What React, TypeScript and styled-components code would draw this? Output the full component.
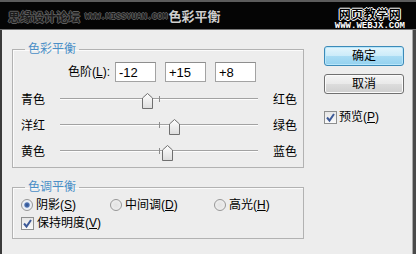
import React from 'react';
import styled, { createGlobalStyle } from 'styled-components';

const GlobalStyle = createGlobalStyle`
  html, body {
    margin: 0;
    padding: 0;
    background: #ededed;
  }
  body {
    font-family: "Liberation Sans", "Noto Sans CJK SC", sans-serif;
    font-size: 12px;
    color: #000;
  }
`;

const sliders = [
  { left: '青色', right: '红色', value: -12 },
  { left: '洋红', right: '绿色', value: 15 },
  { left: '黄色', right: '蓝色', value: 8 },
];

const levels = ['-12', '+15', '+8'];

const Check = () => (
  <svg width="11" height="11" viewBox="0 0 11 11">
    <path d="M2 5.5 L4.5 8.5 L9 2" fill="none" stroke="#3d5a98" strokeWidth="2" />
  </svg>
);

const ThumbShape = () => (
  <svg width="11" height="16" viewBox="0 0 11 16">
    <defs>
      <linearGradient id="tg" x1="0" y1="0" x2="0" y2="1">
        <stop offset="0" stopColor="#ffffff" />
        <stop offset="1" stopColor="#dcdcdc" />
      </linearGradient>
    </defs>
    <path d="M0.5 15.5 V5 L5.5 0.5 L10.5 5 V15.5 Z" fill="url(#tg)" stroke="#6f6f6f" />
  </svg>
);

const App = () => {
  return (
    <>
      <GlobalStyle />
      <Window>
        <TitleBar>
          <SiteMark>思缘设计论坛</SiteMark>
          <SiteUrl>WWW.MISSYUAN.COM</SiteUrl>
          <Title>色彩平衡</Title>
          <RightMark>
            <RightName>网页教学网</RightName>
            <RightUrl>WWW.WEBJX.COM</RightUrl>
          </RightMark>
        </TitleBar>
        <Body>
          <LeftColumn>
            <Group>
              <Legend>色彩平衡</Legend>
              <LevelRow>
                <LevelLabel>
                  色阶(<u>L</u>):
                </LevelLabel>
                {levels.map((v) => (
                  <LevelInput key={v} defaultValue={v} />
                ))}
              </LevelRow>
              <SliderList>
                {sliders.map((s) => (
                  <SliderRow key={s.left}>
                    <SideLabel>{s.left}</SideLabel>
                    <Track>
                      <Thumb style={{ left: 99 + s.value - 5 }}>
                        <ThumbShape />
                      </Thumb>
                    </Track>
                    <SideLabel $right>{s.right}</SideLabel>
                  </SliderRow>
                ))}
              </SliderList>
            </Group>
            <Group $second>
              <Legend>色调平衡</Legend>
              <RadioRow>
                <Option>
                  <Radio $checked />
                  <span>
                    阴影(<u>S</u>)
                  </span>
                </Option>
                <Option>
                  <Radio />
                  <span>
                    中间调(<u>D</u>)
                  </span>
                </Option>
                <Option>
                  <Radio />
                  <span>
                    高光(<u>H</u>)
                  </span>
                </Option>
              </RadioRow>
              <CheckRow>
                <Option>
                  <Box>
                    <Check />
                  </Box>
                  <span>
                    保持明度(<u>V</u>)
                  </span>
                </Option>
              </CheckRow>
            </Group>
          </LeftColumn>
          <RightColumn>
            <Button $primary>确定</Button>
            <Button>取消</Button>
            <Preview>
              <Box>
                <Check />
              </Box>
              <span>
                预览(<u>P</u>)
              </span>
            </Preview>
          </RightColumn>
        </Body>
      </Window>
    </>
  );
};

export default App;

const Window = styled.div`
  width: 416px;
  height: 254px;
  display: flex;
  flex-direction: column;
  background: #4a4a4a;
  overflow: hidden;
`;

const TitleBar = styled.div`
  height: 27px;
  flex: none;
  background: #050505;
  border-top: 2px solid #5c5c5c;
  border-bottom: 1px solid #767676;
  display: flex;
  align-items: center;
  padding: 0 11px 0 8px;
`;

const SiteMark = styled.span`
  font-family: "Noto Sans CJK SC", sans-serif;
  font-size: 12px;
  font-weight: bold;
  line-height: 14px;
  color: #1c1c1c;
  text-shadow: 1px 0 0 #5e5e5e, -1px 0 0 #5e5e5e, 0 1px 0 #5e5e5e, 0 -1px 0 #5e5e5e;
  margin-top: 2px;
`;

const SiteUrl = styled.span`
  font-family: "Liberation Mono", monospace;
  font-size: 8.6px;
  font-weight: bold;
  color: #1c1c1c;
  text-shadow: 1px 0 0 #5a5a5a, -1px 0 0 #5a5a5a, 0 1px 0 #5a5a5a, 0 -1px 0 #5a5a5a;
  margin: 3px 0 0 5px;
`;

const Title = styled.span`
  font-family: "Noto Sans CJK SC", sans-serif;
  font-size: 13px;
  font-weight: bold;
  line-height: 16px;
  color: #cfcfcf;
  margin-left: 1px;
`;

const RightMark = styled.div`
  margin-left: auto;
  display: flex;
  flex-direction: column;
  align-items: center;
  margin-top: 6px;
`;

const RightName = styled.span`
  font-family: "Noto Sans CJK SC", sans-serif;
  font-size: 12px;
  font-weight: bold;
  line-height: 14px;
  color: #000;
  letter-spacing: 0.5px;
  text-shadow: 1px 0 0 #fff, -1px 0 0 #fff, 0 1px 0 #fff, 0 -1px 0 #fff;
`;

const RightUrl = styled.span`
  font-family: "Liberation Mono", monospace;
  font-size: 9px;
  font-weight: bold;
  line-height: 9px;
  color: #fff;
  margin-top: 1px;
`;

const Body = styled.div`
  flex: 1;
  margin-right: 3px;
  background: #ededed;
  border-left: 2px solid #3a3a3a;
  border-right: 1px solid #a8a8a8;
  display: flex;
  padding: 12px 0 0 10px;
`;

const LeftColumn = styled.div`
  width: 292px;
  display: flex;
  flex-direction: column;
`;

const RightColumn = styled.div`
  width: 80px;
  margin-left: 20px;
  padding-top: 4px;
  display: flex;
  flex-direction: column;
  gap: 8px;
`;

const Group = styled.fieldset<{ $second?: boolean }>`
  margin: ${(p) => (p.$second ? '12px 0 0' : '0')};
  padding: 0 0 ${(p) => (p.$second ? '6px' : '2px')};
  border: 1px solid #b2b2b2;
  box-shadow: inset 1px 1px 0 #fbfbfb;
  min-width: 0;
`;

const Legend = styled.legend`
  margin-left: 12px;
  padding: 0 3px;
  font-size: 12px;
  line-height: 14px;
  color: #4a8fc7;
`;

const LevelRow = styled.div`
  display: flex;
  align-items: center;
  gap: 9px;
  margin-top: 6px;
  padding-left: 50px;
`;

const LevelLabel = styled.span`
  width: 47px;
  margin-right: -4px;
  text-align: right;
  line-height: 14px;
`;

const LevelInput = styled.input`
  box-sizing: border-box;
  width: 41px;
  height: 20px;
  margin: 0;
  padding: 0 3px;
  border: 1px solid #a3a3a3;
  border-top-color: #8e8e8e;
  background: #fff;
  font-family: "Liberation Sans", sans-serif;
  font-size: 13px;
  color: #000;
  outline: none;
`;

const SliderList = styled.div`
  margin-top: 5px;
  display: flex;
  flex-direction: column;
`;

const SliderRow = styled.div`
  display: grid;
  grid-template-columns: 39px 198px auto;
  align-items: center;
  height: 26px;
  padding-left: 8px;
`;

const SideLabel = styled.span<{ $right?: boolean }>`
  line-height: 14px;
  margin-left: ${(p) => (p.$right ? '15px' : '0')};
`;

const Track = styled.div`
  position: relative;
  height: 26px;
  &::before {
    content: '';
    position: absolute;
    left: 0;
    right: 0;
    top: 11px;
    border-top: 1px solid #a2a2a2;
    border-bottom: 1px solid #fdfdfd;
  }
  &::after {
    content: '';
    position: absolute;
    left: 99px;
    top: 9px;
    width: 1px;
    height: 6px;
    background: #8c8c8c;
  }
`;

const Thumb = styled.div`
  position: absolute;
  top: 6px;
  width: 11px;
  height: 16px;
  z-index: 1;
  svg {
    display: block;
  }
`;

const RadioRow = styled.div`
  display: grid;
  grid-template-columns: 89px 104px auto;
  align-items: center;
  height: 18px;
  margin-top: 2px;
  padding-left: 8px;
`;

const CheckRow = styled.div`
  display: flex;
  align-items: center;
  height: 18px;
  padding-left: 8px;
`;

const Option = styled.label`
  display: inline-flex;
  align-items: center;
  gap: 3px;
  line-height: 14px;
  white-space: nowrap;
`;

const Radio = styled.span<{ $checked?: boolean }>`
  box-sizing: border-box;
  width: 12px;
  height: 12px;
  border-radius: 50%;
  border: 1px solid #979797;
  background: ${(p) =>
    p.$checked
      ? 'radial-gradient(circle, #2c4c86 0, #4f74b4 2.2px, #e8eef6 3.2px, #f4f4f4 100%)'
      : 'radial-gradient(circle, #e2e2e2 0, #f2f2f2 100%)'};
`;

const Box = styled.span`
  box-sizing: border-box;
  width: 13px;
  height: 13px;
  border: 1px solid #8e8f8f;
  background: linear-gradient(#e6e6e6, #fafafa);
  display: flex;
  align-items: center;
  justify-content: center;
  svg {
    display: block;
  }
`;

const Button = styled.button<{ $primary?: boolean }>`
  box-sizing: border-box;
  width: 80px;
  height: 20px;
  margin: 0;
  padding: 0;
  border-radius: 3px;
  border: 1px solid ${(p) => (p.$primary ? '#3c8ab8' : '#707070')};
  background: ${(p) =>
    p.$primary
      ? 'linear-gradient(#e4f5fc 0, #cbebf9 50%, #a9dcf4 51%, #93d1ef 100%)'
      : 'linear-gradient(#f4f4f4 0, #e9e9e9 50%, #dcdcdc 51%, #cfcfcf 100%)'};
  box-shadow: ${(p) => (p.$primary ? 'inset 0 0 0 1px #b8e6fa' : 'inset 0 0 0 1px #fbfbfb')};
  font-family: "Liberation Sans", "Noto Sans CJK SC", sans-serif;
  font-size: 12px;
  line-height: 14px;
  color: #000;
`;

const Preview = styled.label`
  display: flex;
  align-items: center;
  gap: 2px;
  margin-top: 8px;
  line-height: 14px;
`;
